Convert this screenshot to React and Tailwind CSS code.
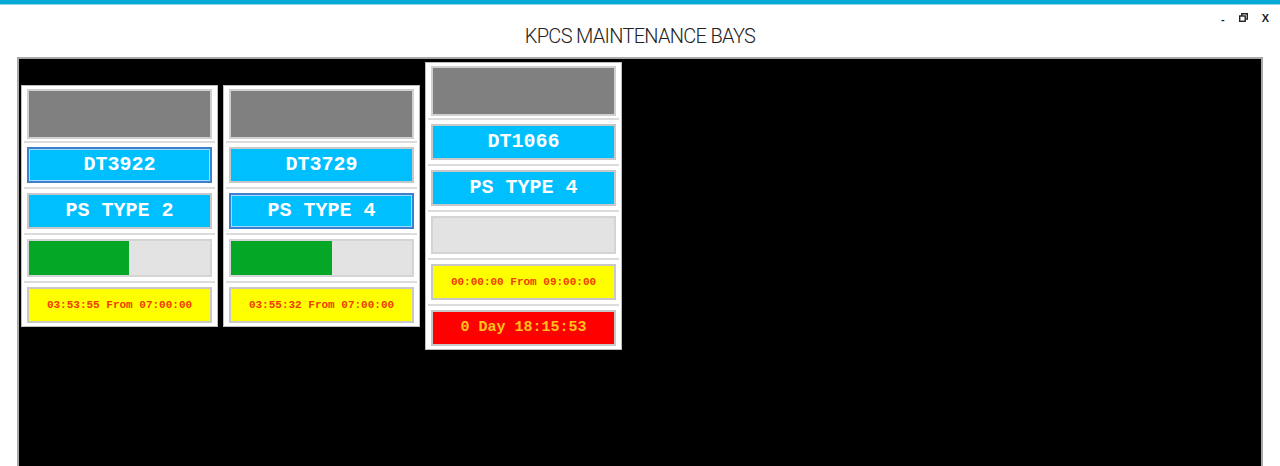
const bays = [
  {
    id: "DT3922",
    type: "PS TYPE 2",
    progress: 55,
    timer: "03:53:55 From 07:00:00",
    focusId: true,
  },
  {
    id: "DT3729",
    type: "PS TYPE 4",
    progress: 56,
    timer: "03:55:32 From 07:00:00",
    focusType: true,
  },
  {
    id: "DT1066",
    type: "PS TYPE 4",
    progress: 0,
    timer: "00:00:00 From 09:00:00",
    overdue: "0 Day 18:15:53",
  },
];

const mono = { fontFamily: '"Liberation Mono", "Courier New", monospace' };

function Row({ children, first, last }) {
  return (
    <div
      className={`px-[3px] ${first ? "pt-[1px]" : "pt-[4px]"} ${
        first ? "pb-[2px]" : last ? "pb-[1px]" : "pb-[4px]"
      } ${last ? "" : "border-b-2 border-[#dcdcdc]"}`}
    >
      {children}
    </div>
  );
}

function LabelBox({ text, focused }) {
  return (
    <div
      className={`flex h-[36px] items-center justify-center bg-[#00bfff] text-[20px] font-bold text-white border-2 ${
        focused
          ? "border-[#3f7fd2] shadow-[inset_0_0_0_1px_#9fdcff]"
          : "border-[#c8c8c8]"
      }`}
      style={mono}
    >
      {text}
    </div>
  );
}

function BayCard({ bay }) {
  const rows = [];
  rows.push(
    <div key="g" className="h-[50px] border-2 border-[#d0d0d0] bg-[#808080]" />
  );
  rows.push(<LabelBox key="id" text={bay.id} focused={bay.focusId} />);
  rows.push(<LabelBox key="type" text={bay.type} focused={bay.focusType} />);
  rows.push(
    <div
      key="p"
      className="flex h-[38px] border-2 border-[#d4d4d4] bg-[#e3e3e3]"
    >
      <div className="h-full bg-[#05a826]" style={{ width: `${bay.progress}%` }} />
    </div>
  );
  rows.push(
    <div
      key="t"
      className="flex h-[36px] items-center justify-center border-2 border-[#c8c8c8] bg-[#ffff00] text-[11px] font-bold text-[#f03c00]"
      style={mono}
    >
      {bay.timer}
    </div>
  );
  if (bay.overdue) {
    rows.push(
      <div
        key="o"
        className="flex h-[36px] items-center justify-center border-2 border-[#c8c8c8] bg-[#ff0000] text-[15px] font-bold text-[#ffc21a]"
        style={mono}
      >
        {bay.overdue}
      </div>
    );
  }

  return (
    <div className="w-[197px] border border-[#bdbdbd] bg-white p-[2px]">
      {rows.map((r, i) => (
        <Row key={i} first={i === 0} last={i === rows.length - 1}>
          {r}
        </Row>
      ))}
    </div>
  );
}

export default function App() {
  return (
    <div className="flex h-[466px] w-[1280px] flex-col overflow-hidden bg-white">
      <div className="h-[4px] bg-[#08aad8]" />
      <div className="h-[1px] bg-[#8fd6ee]" />

      <header className="relative flex h-[52px] items-end justify-center pb-[6px]">
        <h1
          className="text-[20px] font-light tracking-[-0.7px] text-[#222]"
          style={{ fontFamily: 'Roboto, "Open Sans", sans-serif' }}
        >
          KPCS MAINTENANCE BAYS
        </h1>
        <div
          className="absolute right-[11px] top-[3px] flex items-center gap-[14px] text-[11px] font-bold text-[#222]"
          style={{ fontFamily: '"Liberation Sans", Arial, sans-serif' }}
        >
          <span className="pt-[3px]">-</span>
          <svg width="9" height="9" viewBox="0 0 9 9" fill="none" stroke="#222" strokeWidth="1.4">
            <rect x="0.7" y="3" width="5.5" height="5.3" />
            <path d="M2.8 3V0.8h5.5v5.3H6.2" />
          </svg>
          <span>X</span>
        </div>
      </header>

      <main className="mx-[17px] flex-1 border-x-2 border-t-2 border-[#a8a8a8] bg-black">
        <div className="flex h-[292px] items-center gap-[5px] pl-[2px] pt-[2px]">
          {bays.map((b) => (
            <BayCard key={b.id} bay={b} />
          ))}
        </div>
      </main>
    </div>
  );
}
